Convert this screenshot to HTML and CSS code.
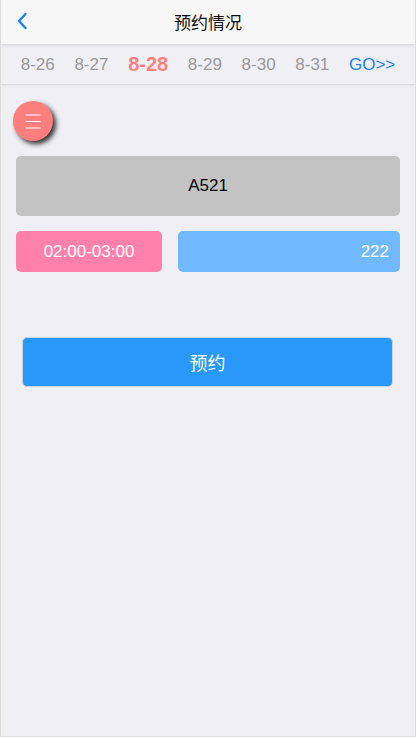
FILE: index.html
```html
<!DOCTYPE html>
<html lang="zh-CN">
<head>
<meta charset="utf-8">
<title>预约情况</title>
<link rel="stylesheet" href="styles.css">
</head>
<body>
<div class="page">
  <header class="header">
    <span class="back">
      <svg width="12" height="18" viewBox="0 0 12 18"><path d="M9.5 2 L3 9 L9.5 16" fill="none" stroke="#1a7ff5" stroke-width="2.4" stroke-linecap="round" stroke-linejoin="round"/></svg>
    </span>
    <h1 class="title">预约情况</h1>
  </header>
  <nav class="dates">
    <span class="date">8-26</span>
    <span class="date">8-27</span>
    <span class="date active">8-28</span>
    <span class="date">8-29</span>
    <span class="date">8-30</span>
    <span class="date">8-31</span>
    <span class="go">GO&gt;&gt;</span>
  </nav>
  <main class="content">
    <div class="menu-row">
      <span class="menu-btn">
        <svg width="16" height="15" viewBox="0 0 16 15"><path d="M0.5 1H15.5M0.5 7.5H15.5M0.5 14H15.5" stroke="#fff" stroke-width="1" fill="none"/></svg>
      </span>
    </div>
    <div class="room">A521</div>
    <div class="slot-row">
      <div class="slot-time">02:00-03:00</div>
      <div class="slot-num">222</div>
    </div>
    <button class="reserve">预约</button>
  </main>
</div>
</body>
</html>
```

FILE: styles.css
```css
* { box-sizing: border-box; }
html, body { margin: 0; padding: 0; }
body {
  font-family: "Liberation Sans", Arial, "Noto Sans CJK SC", sans-serif;
  background: #efeff4;
}
.page {
  width: 416px;
  height: 737px;
  border: 1px solid #dcdcdc;
  border-top: none;
  background: #efeff4;
  display: flex;
  flex-direction: column;
  overflow: hidden;
}
.header {
  height: 44px;
  background: #f7f7f7;
  display: flex;
  align-items: center;
  justify-content: center;
  position: relative;
  box-shadow: 0 1px 4px rgba(0,0,0,0.12);
  z-index: 2;
}
.back {
  position: absolute;
  left: 15px;
  top: 12px;
  display: flex;
}
.title {
  margin: 0;
  font-size: 17px;
  font-weight: normal;
  color: #111;
  font-family: "Noto Sans CJK SC", sans-serif;
  line-height: 44px;
}
.dates {
  height: 41px;
  display: flex;
  align-items: center;
  justify-content: space-evenly;
  border-bottom: 1px solid #dcdce0;
  box-shadow: 0 1px 2px rgba(0,0,0,0.05);
  padding-top: 1px;
}
.date {
  font-size: 17px;
  color: #999;
}
.date.active {
  font-size: 20px;
  font-weight: bold;
  color: #ff7f7f;
}
.go {
  font-size: 17px;
  color: #1a7ff5;
}
.content {
  padding: 16px 15px 0 15px;
  display: flex;
  flex-direction: column;
}
.menu-row {
  display: flex;
}
.menu-btn {
  width: 40px;
  height: 40px;
  margin-left: -3px;
  border-radius: 50%;
  background: #ff7f7f;
  display: flex;
  align-items: center;
  justify-content: center;
  box-shadow: 3px 3px 5px rgba(0,0,0,0.8);
}
.room {
  margin-top: 15px;
  height: 60px;
  background: #c3c3c3;
  border-radius: 5px;
  display: flex;
  align-items: center;
  justify-content: center;
  font-size: 17px;
  color: #000;
}
.slot-row {
  margin-top: 15px;
  display: flex;
  gap: 16px;
}
.slot-time {
  width: 146px;
  height: 41px;
  background: #ff80aa;
  border-radius: 5px;
  color: #fff;
  font-size: 17px;
  display: flex;
  align-items: center;
  justify-content: center;
}
.slot-num {
  flex: 1;
  height: 41px;
  background: #70b8ff;
  border-radius: 5px;
  color: #fff;
  font-size: 17px;
  display: flex;
  align-items: center;
  justify-content: flex-end;
  padding-right: 11px;
}
.reserve {
  margin: 65px 7px 0 6px;
  height: 50px;
  background: #2899f9;
  border: 1px solid #c8d4e0;
  border-radius: 5px;
  color: #fff;
  font-size: 18px;
  font-family: "Noto Sans CJK SC", sans-serif;
  padding: 0;
}
```
